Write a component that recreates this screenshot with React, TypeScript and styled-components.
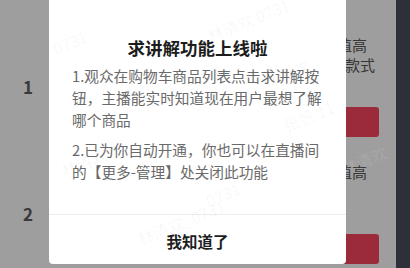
import styled, { createGlobalStyle } from 'styled-components';

const GlobalStyle = createGlobalStyle`
  html, body {
    margin: 0;
    padding: 0;
    background: #9e9e9e;
  }
  body {
    font-family: "Noto Sans CJK SC", "Noto Sans", sans-serif;
  }
`

const Page = styled.div`
  position: relative;
  width: 410px;
  height: 268px;
  overflow: hidden;
  display: grid;
  grid-template-columns: 1fr 14px;
  background: #9e9e9e;
`

const List = styled.div`
  display: flex;
  flex-direction: column;
  gap: 25px;
  padding-top: 35px;
`

const Row = styled.div`
  display: grid;
  grid-template-columns: 48px 1fr;
  height: 102px;
`

const Index = styled.div`
  display: flex;
  align-items: center;
  justify-content: center;
  padding-left: 8px;
  font-size: 17px;
  font-weight: 600;
  color: #3a3a3a;
`

const Info = styled.div`
  display: flex;
  flex-direction: column;
  justify-content: space-between;
  align-items: flex-end;
  padding-right: 17px;
`

const Name = styled.div`
  display: flex;
  flex-direction: column;
  align-items: flex-end;
  font-size: 15px;
  line-height: 20px;
  color: #363636;
`

const NameLine = styled.span<{ $shift?: number }>`
  margin-right: ${props => props.$shift || 0}px;
`

const BuyButton = styled.div`
  width: 84px;
  height: 30px;
  border-radius: 3px;
  background: #9b2a3b;
`

const SideBar = styled.div`
  background: #2d3039;
`

const Modal = styled.div`
  position: absolute;
  left: 49px;
  top: 0;
  width: 297px;
  height: 264px;
  background: #fff;
  border-radius: 0 0 4px 4px;
  display: flex;
  flex-direction: column;
`

const Title = styled.h2`
  margin: 0;
  padding-top: 37px;
  font-size: 17.5px;
  line-height: 22px;
  font-weight: 700;
  color: #1c1c1c;
  text-align: center;
`

const Body = styled.div`
  flex: 1;
  padding: 6px 18px 0 23px;
`

const Para = styled.p`
  margin: 0 0 8px;
  font-size: 14.7px;
  line-height: 22px;
  color: #6a6a6a;
`

const Footer = styled.div`
  height: 50px;
  border-top: 1px solid #ededed;
  display: flex;
  align-items: center;
  justify-content: center;
  padding-top: 3px;
  box-sizing: border-box;
  font-size: 15.5px;
  font-weight: 700;
  color: #1e1e1e;
`

const Watermark = styled.span<{ $x: number; $y: number; $dark?: boolean }>`
  position: absolute;
  left: ${props => props.$x}px;
  top: ${props => props.$y}px;
  transform: rotate(-22deg);
  font-size: 16px;
  white-space: nowrap;
  pointer-events: none;
  color: ${props => (props.$dark ? 'rgba(255,255,255,0.1)' : 'rgba(0,0,0,0.04)')};
`

const products = [
  { id: 1, lines: ['简约百搭颜值高', '2023新款式'] },
  { id: 2, lines: ['简约百搭颜值高'] },
]

export default function App() {
  return (
    <>
      <GlobalStyle />
      <Page>
        <List>
          {products.map(p => (
            <Row key={p.id}>
              <Index>{p.id}</Index>
              <Info>
                <Name>
                  {p.lines.map((line, i) => (
                    <NameLine key={i} $shift={i === 0 ? 12 : 4}>{line}</NameLine>
                  ))}
                </Name>
                <BuyButton />
              </Info>
            </Row>
          ))}
        </List>
        <SideBar />

        <Modal>
          <Title>求讲解功能上线啦</Title>
          <Body>
            <Para>1.观众在购物车商品列表点击求讲解按钮，主播能实时知道现在用户最想了解哪个商品</Para>
            <Para>2.已为你自动开通，你也可以在直播间的【更多-管理】处关闭此功能</Para>
          </Body>
          <Footer>我知道了</Footer>
        </Modal>

        <Watermark $x={52} $y={30}>0731</Watermark>
        <Watermark $x={205} $y={8}>林清欢 0731</Watermark>
        <Watermark $x={262} $y={62}>林清欢</Watermark>
        <Watermark $x={282} $y={104}>张帆 11</Watermark>
        <Watermark $x={60} $y={150}>林清欢</Watermark>
        <Watermark $x={135} $y={210}>林清欢_0731</Watermark>
        <Watermark $x={205} $y={182}>0731</Watermark>
        <Watermark $x={340} $y={148} $dark>林清欢</Watermark>
      </Page>
    </>
  )
}
